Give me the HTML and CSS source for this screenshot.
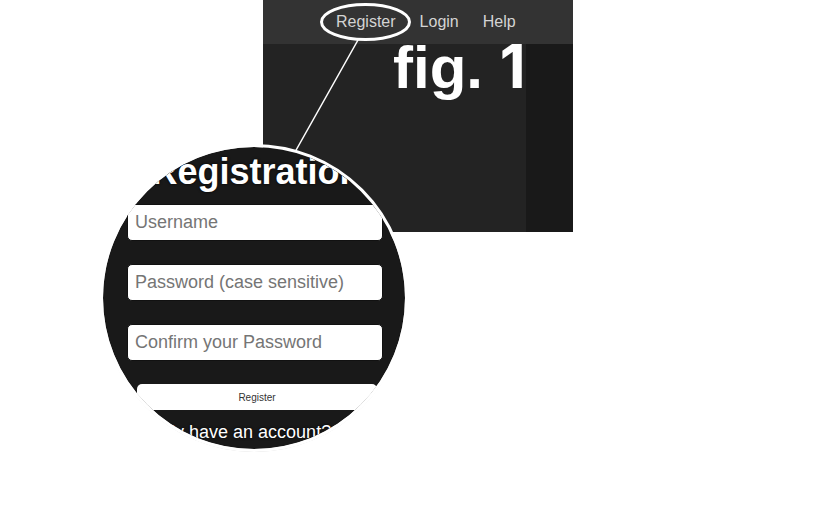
FILE: index.html
```
<!DOCTYPE html>
<html lang="en">
<head>
<meta charset="utf-8">
<title>Registration help</title>
<link rel="stylesheet" href="styles.css">
</head>
<body>
<figure class="figure">
  <div class="site">
    <nav class="nav">
      <a href="#register">Register</a>
      <a href="#login">Login</a>
      <a href="#help">Help</a>
    </nav>
    <div class="page">
      <figcaption class="caption">fig. <span class="number">1</span></figcaption>
    </div>
  </div>
  <svg class="callout" viewBox="0 0 320 160" aria-hidden="true">
    <ellipse cx="105.500" cy="22" rx="44" ry="17.500"/>
    <path d="M98 40 35 152"/>
  </svg>
  <form class="lens">
    <h1 class="title">Registration</h1>
    <input class="field" type="text" placeholder="Username" aria-label="Username">
    <input class="field" type="password" placeholder="Password (case sensitive)" aria-label="Password">
    <input class="field" type="password" placeholder="Confirm your Password" aria-label="Confirm your Password">
    <button class="submit" type="button">Register</button>
    <p class="note">Already have an account?</p>
  </form>
</figure>
</body>
</html>
```
FILE: styles.css
```
* {
  box-sizing: border-box;
}

body {
  margin: 0;
  background: #fff;
  font-family: "Liberation Sans", Arial, sans-serif;
}

.figure {
  position: relative;
  min-height: 100vh;
  margin: 0;
  padding: 0 263px;
}

.site {
  min-width: 310px;
  background: #191919;
}

.nav {
  display: flex;
  gap: 24px;
  height: 44px;
  padding: 12px 0 0 73px;
  background: #333;
  font-size: 16px;
  line-height: 20px;
}

.nav a {
  color: #d4d4d4;
  text-decoration: none;
}

.page {
  height: 188px;
  margin-right: 47px;
  background: #232323;
}

.caption {
  padding-left: 130px;
  color: #fff;
  font-size: 60px;
  font-weight: bold;
  line-height: 44px;
  white-space: nowrap;
}

.number {
  font-family: Inter, sans-serif;
}

.callout {
  position: absolute;
  top: 0;
  left: 260px;
  width: 320px;
  height: 160px;
  fill: none;
  stroke: #fff;
  stroke-width: 3;
}

.callout path {
  stroke-width: 1.500;
}

.lens {
  position: absolute;
  top: 144px;
  left: 100px;
  display: flex;
  flex-direction: column;
  align-items: center;
  width: 308px;
  height: 308px;
  padding: 5px 0 0 2px;
  overflow: hidden;
  border: 3px solid #fff;
  border-radius: 50%;
  background: #191919;
  background-clip: padding-box;
  box-shadow: inset 0 0 1px #191919, 0 1px 0 -1px #ccc;
}

.title {
  margin: 0 0 12px;
  padding-left: 3px;
  color: #fff;
  font-size: 36px;
  line-height: 40px;
  text-shadow: 0 0 3px #000;
}

.field {
  flex: none;
  width: 256px;
  height: 37px;
  margin: 0 0 23px;
  padding: 0 7px;
  border: 1px solid #111;
  border-radius: 5px;
  background: #fff;
  color: #222;
  font: 18px "Liberation Sans", Arial, sans-serif;
}

.field::placeholder {
  color: #757575;
}

.submit {
  flex: none;
  width: 240px;
  height: 26px;
  margin-left: 4px;
  padding: 0;
  border: 0;
  border-radius: 5px;
  background: #fff;
  color: #333;
  font: 10px "Liberation Sans", Arial, sans-serif;
}

.note {
  width: 264px;
  margin: 12px 0 0;
  color: #fff;
  font-size: 18px;
  line-height: 20px;
  text-shadow: 0 0 3px #000;
}
```
